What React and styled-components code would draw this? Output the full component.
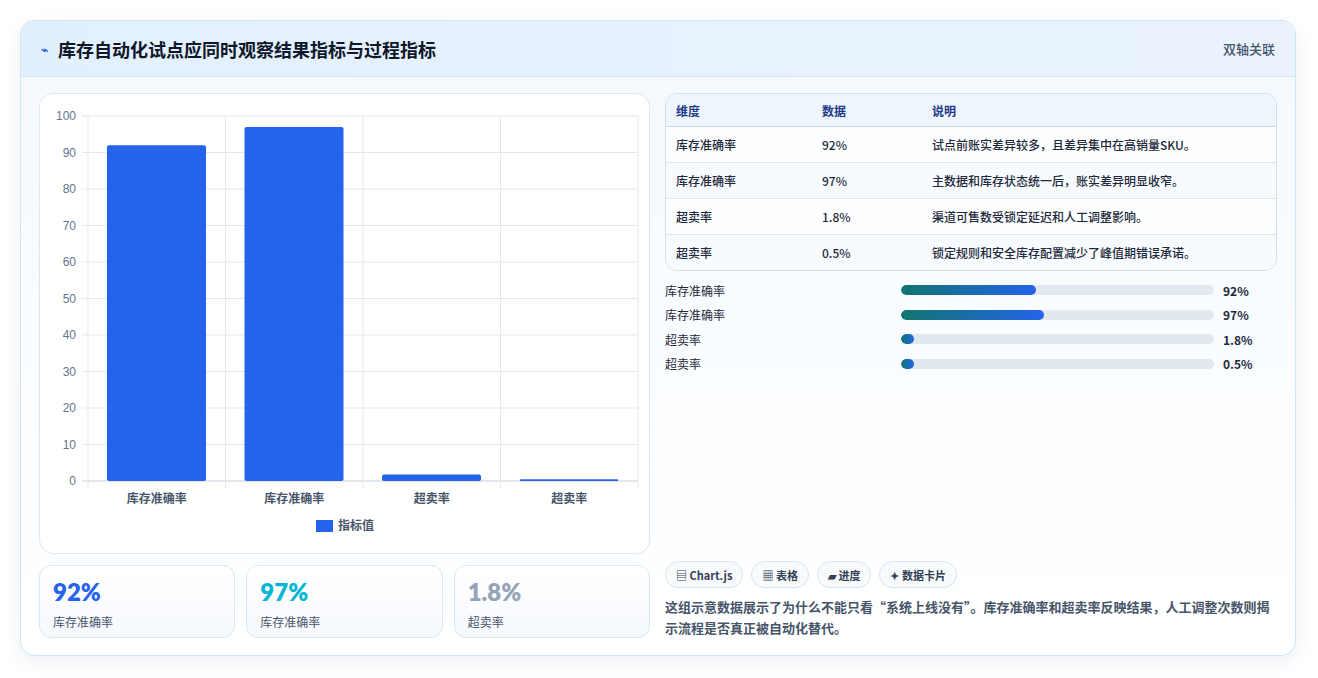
import React from "react";
import styled, { createGlobalStyle } from "styled-components";

const G = createGlobalStyle`
  body{margin:0;background:#fff;font-family:"Noto Sans CJK SC","Noto Sans",sans-serif;}
`;
const Page = styled.div`padding:20px 20px 20px 20px;`;
const Card = styled.div`
  width:1276px;height:636px;box-sizing:border-box;border:1px solid #cfe6f3;border-radius:14px;
  background:linear-gradient(180deg,#f3f9fe 0%,#fbfdff 60%,#fff 100%);
  box-shadow:0 6px 18px rgba(30,60,110,0.08);overflow:hidden;display:flex;flex-direction:column;
`;
const Header = styled.div`
  height:55px;flex:none;display:flex;align-items:center;justify-content:space-between;
  padding:0 20px;background:linear-gradient(90deg,#e2f0fd,#eaf3fd);border-bottom:1px solid #d6e8f6;
`;
const Title = styled.h1`margin:0;font-size:18px;font-weight:700;color:#0f172a;display:flex;align-items:center;gap:10px;`;
const Side = styled.span`font-size:13px;color:#475569;font-weight:500;`;
const Body = styled.div`flex:1;display:grid;grid-template-columns:611px 612px;gap:15px;padding:16px 18px 18px 18px;`;
const Col = styled.div`display:flex;flex-direction:column;gap:11px;min-height:0;`;
const ChartBox = styled.div`height:461px;box-sizing:border-box;border:1px solid #dde7f1;border-radius:14px;background:#fff;`;
const Stats = styled.div`display:grid;grid-template-columns:repeat(3,1fr);gap:11px;`;
const Stat = styled.div`height:73px;box-sizing:border-box;border:1px solid #d9e7f5;border-radius:12px;background:linear-gradient(180deg,#fff,#f6f9fd);padding:11px 13px;`;
const StatV = styled.div`font-family:Lato,"Noto Sans",sans-serif;font-size:24px;font-weight:800;color:${p=>p.c};line-height:30px;`;
const StatL = styled.div`font-size:12px;color:#475569;margin-top:6px;`;
const Table = styled.div`border:1px solid #d3dfeb;border-radius:12px;overflow:hidden;background:#fff;`;
const Row = styled.div`
  display:grid;grid-template-columns:146px 110px 1fr;padding:0 10px;align-items:center;
  height:${p=>p.h?32:35}px;font-size:12px;color:${p=>p.h?"#1e3a8a":"#1e293b"};font-weight:${p=>p.h?700:500};
  background:${p=>p.h?"#eef5fd":p.alt?"#f8fbfe":"#fdfeff"};
  border-top:${p=>p.first?"none":"1px solid #dfe7ef"};
  ${p=>p.h?"border-bottom:1px solid #cbd9e7;":""}
`;
const Bars = styled.div`display:flex;flex-direction:column;gap:6.5px;margin-top:4px;`;
const BarRow = styled.div`display:grid;grid-template-columns:227px 313px 1fr;column-gap:9px;align-items:center;height:18px;font-size:12px;color:#1e293b;`;
const Track = styled.div`height:10px;border-radius:5px;background:#e2e8f0;overflow:hidden;`;
const Fill = styled.div`height:100%;border-radius:5px;background:linear-gradient(90deg,#0f766e,#2563eb);`;
const Val = styled.span`font-weight:700;`;
const Spacer = styled.div`flex:1;`;
const Tags = styled.div`display:flex;gap:8px;`;
const Tag = styled.span`height:27px;box-sizing:border-box;padding:0 10px;border:1px solid #dbe4ee;border-radius:14px;background:#f8fafc;font-size:11px;font-weight:700;color:#334155;display:flex;align-items:center;gap:4px;`;
const Note = styled.p`margin:8px 0 0;font-size:13px;line-height:21px;font-weight:600;color:#475569;`;

const data=[["库存准确率",92,"试点前账实差异较多，且差异集中在高销量SKU。"],["库存准确率",97,"主数据和库存状态统一后，账实差异明显收窄。"],["超卖率",1.8,"渠道可售数受锁定延迟和人工调整影响。"],["超卖率",0.5,"锁定规则和安全库存配置减少了峰值期错误承诺。"]];

function Chart(){
  const x0=48,x1=598,y0=22,y1=387,cw=(x1-x0)/4;
  const ticks=[0,10,20,30,40,50,60,70,80,90,100];
  return <svg width="611" height="461" style={{display:"block"}}>
    {ticks.map(t=>{const y=y1-(t/100)*(y1-y0);return <g key={t}>
      <line x1={x0-6} x2={x1} y1={y} y2={y} stroke={t===0?"#c7cfdb":"#e5e7eb"}/>
      <text x={36} y={y+4} textAnchor="end" fontSize="12" fill="#64748b" fontFamily="Liberation Sans">{t}</text></g>})}
    {[0,1,2,3,4].map(i=><line key={i} x1={x0+i*cw} x2={x0+i*cw} y1={y0} y2={y1+8} stroke="#e5e7eb"/>)}
    {data.map((d,i)=>{const h=(d[1]/100)*(y1-y0);return <g key={i}>
      <rect x={x0+i*cw+19} y={y1-h} width={99} height={h} rx="2" fill="#2563eb"/>
      <text x={x0+i*cw+cw/2} y={y1+22} textAnchor="middle" fontSize="12" fill="#475569" fontWeight="600">{d[0]}</text></g>})}
    <rect x={276} y={426} width={17} height={12} fill="#2563eb"/>
    <text x={298} y={436} fontSize="12" fill="#475569" fontWeight="600">指标值</text>
  </svg>;
}

export default function App(){
  return <Page><G/><Card>
    <Header><Title><span style={{color:"#2563eb",fontSize:12}}>⌁</span>库存自动化试点应同时观察结果指标与过程指标</Title><Side>双轴关联</Side></Header>
    <Body>
      <Col>
        <ChartBox><Chart/></ChartBox>
        <Stats>
          <Stat><StatV c="#2563eb">92%</StatV><StatL>库存准确率</StatL></Stat>
          <Stat><StatV c="#06b6d4">97%</StatV><StatL>库存准确率</StatL></Stat>
          <Stat><StatV c="#94a3b8">1.8%</StatV><StatL>超卖率</StatL></Stat>
        </Stats>
      </Col>
      <Col style={{gap:0}}>
        <Table>
          <Row h first><span>维度</span><span>数据</span><span>说明</span></Row>
          {data.map((d,i)=><Row key={i} first={i===0} alt={i%2===1}><span>{d[0]}</span><span>{d[1]}%</span><span>{d[2]}</span></Row>)}
        </Table>
        <Bars style={{marginTop:10}}>
          {data.map((d,i)=><BarRow key={i}><span>{d[0]}</span><Track><Fill style={{width:Math.max(d[1]*0.47,4)+"%"}}/></Track><Val>{d[1]}%</Val></BarRow>)}
        </Bars>
        <Spacer/>
        <Tags><Tag>▤ Chart.js</Tag><Tag>▦ 表格</Tag><Tag>▰ 进度</Tag><Tag>✦ 数据卡片</Tag></Tags>
        <Note>这组示意数据展示了为什么不能只看“系统上线没有”。库存准确率和超卖率反映结果，人工调整次数则揭示流程是否真正被自动化替代。</Note>
      </Col>
    </Body>
  </Card></Page>;
}
